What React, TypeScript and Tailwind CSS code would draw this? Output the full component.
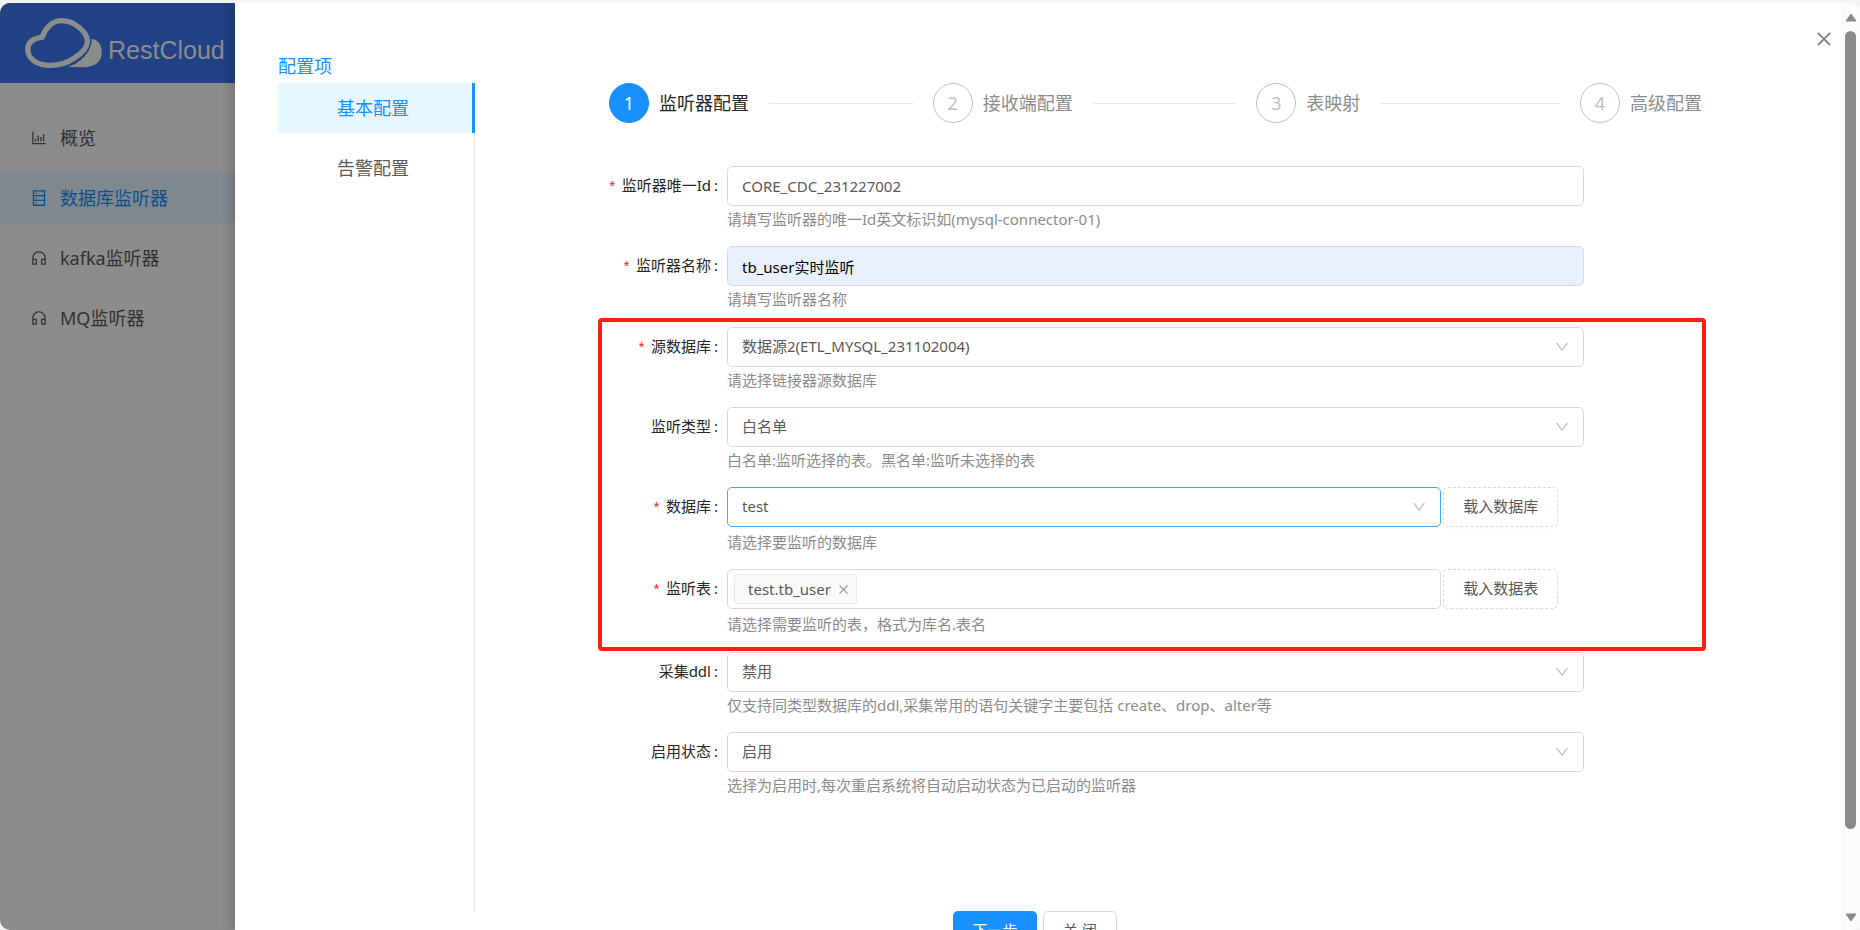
import { useState, type ReactNode } from 'react';
import {
  AiOutlineBarChart,
  AiOutlineClose,
  AiOutlineCustomerService,
  AiOutlineDatabase,
  AiOutlineDown,
} from 'react-icons/ai';

const menuItems = [
  { label: '概览', icon: AiOutlineBarChart, active: false },
  { label: '数据库监听器', icon: AiOutlineDatabase, active: true },
  { label: 'kafka监听器', icon: AiOutlineCustomerService, active: false },
  { label: 'MQ监听器', icon: AiOutlineCustomerService, active: false },
];

const steps = ['监听器配置', '接收端配置', '表映射', '高级配置'];
const tabs = ['基本配置', '告警配置'];

function Logo() {
  return (
    <svg viewBox="75 54 230 150" className="w-[77px] h-[50px]" aria-hidden="true">
      <path
        d="M126 112C135 84 157 62 184 62C222 62 262 96 262 124C262 140 245 160 222 175C200 190 178 196 150 196C112 196 83 178 83 148C83 126 102 113 126 112Z"
        fill="none"
        stroke="#8c8c8c"
        strokeWidth="16"
        strokeLinejoin="round"
      />
      <path
        d="M274 117C292 118 304 132 305 156C305 186 285 200 250 202L203 201C238 190 277 156 274 117Z"
        fill="#8c8c8c"
      />
    </svg>
  );
}

function Sidebar() {
  return (
    <aside className="w-[235px] shrink-0 bg-[#8c8c8c]">
      <div className="flex h-20 items-center bg-[#204184] pl-[25px]">
        <Logo />
        <span className="ml-[6px] pt-[14px] font-['Liberation_Sans',sans-serif] text-[25px] leading-8 text-[#8c8c8c]">
          RestCloud
        </span>
      </div>
      <nav className="mt-[30px] flex flex-col gap-[10px]">
        {menuItems.map(({ label, icon: Icon, active }) => (
          <a
            key={label}
            href="#"
            className={`flex h-[50px] items-center gap-3 pl-[30px] text-[18px] ${
              active ? 'bg-[#7f888c] text-[#0d4f8c]' : 'text-[#313131]'
            }`}
          >
            <Icon size={18} />
            <span>{label}</span>
          </a>
        ))}
      </nav>
    </aside>
  );
}

function Steps() {
  return (
    <ol className="flex gap-5">
      {steps.map((title, i) => (
        <li
          key={title}
          className={`flex items-center ${i < steps.length - 1 ? 'flex-1' : 'flex-none'}`}
        >
          <span
            className={`flex size-10 shrink-0 items-center justify-center rounded-full border text-[18px] ${
              i === 0
                ? 'border-[#1890ff] bg-[#1890ff] text-white'
                : 'border-[#bfbfbf] text-[#bfbfbf]'
            }`}
          >
            {i + 1}
          </span>
          <span
            className={`ml-[10px] whitespace-nowrap text-[18px] ${
              i === 0 ? 'text-[#262626]' : 'text-[#8c8c8c]'
            }`}
          >
            {title}
          </span>
          {i < steps.length - 1 && <span className="ml-5 h-px flex-1 bg-[#e8e8e8]" />}
        </li>
      ))}
    </ol>
  );
}

interface FieldProps {
  id: string;
  label: string;
  hint: string;
  required?: boolean;
  action?: string;
  children: ReactNode;
}

function Field({ id, label, hint, required, action, children }: FieldProps) {
  return (
    <div className="flex pr-[118px]">
      <label
        htmlFor={id}
        className="flex h-[38px] w-[118px] shrink-0 items-center justify-end whitespace-nowrap pr-[9px] text-[#262626]"
      >
        {required && (
          <span className="mr-[5px] pt-2 font-['Liberation_Mono',monospace] text-[#f5222d]">*</span>
        )}
        {label}
        <span className="ml-[3px]">:</span>
      </label>
      <div className="min-w-0 flex-1">
        {action ? (
          <div className="flex h-[42px] items-start gap-0.5">
            <div className="w-5/6">{children}</div>
            <button
              type="button"
              className="h-10 w-[115px] shrink-0 rounded-[5px] border border-dashed border-[#d9d9d9] pb-0.5 text-[#595959] shadow-[0_2px_0_rgba(0,0,0,0.015)]"
            >
              {action}
            </button>
          </div>
        ) : (
          children
        )}
        <p className="leading-[26px] text-[#8c8c8c]">{hint}</p>
      </div>
    </div>
  );
}

function Select({ id, options, focused }: { id: string; options: string[]; focused?: boolean }) {
  return (
    <div className="relative">
      <select
        id={id}
        className={`block h-10 w-full appearance-none rounded-[5px] border bg-white px-[14px] pb-0.5 text-[#595959] outline-none ${
          focused ? 'border-[#40a9ff]' : 'border-[#d9d9d9]'
        }`}
      >
        {options.map((option) => (
          <option key={option}>{option}</option>
        ))}
      </select>
      <AiOutlineDown
        size={16}
        className="pointer-events-none absolute right-[14px] top-3 text-[#bfbfbf]"
      />
    </div>
  );
}

function TableSelect() {
  const [tables, setTables] = useState(['test.tb_user']);

  return (
    <div className="flex h-10 items-center gap-1 rounded-[5px] border border-[#d9d9d9] bg-white px-[6px]">
      {tables.map((table) => (
        <span
          key={table}
          className="flex h-[30px] items-center gap-[6px] rounded-[3px] border border-[#e8e8e8] bg-[#fafafa] pl-[13px] pr-[6px] text-[#595959]"
        >
          {table}
          <button
            type="button"
            aria-label="移除"
            onClick={() => setTables(tables.filter((t) => t !== table))}
            className="text-[#8c8c8c]"
          >
            <AiOutlineClose size={13} />
          </button>
        </span>
      ))}
      <input id="tables" className="min-w-0 flex-1 outline-none" />
    </div>
  );
}

function ListenerForm() {
  const [listenerId, setListenerId] = useState('CORE_CDC_231227002');
  const [name, setName] = useState('tb_user实时监听');

  return (
    <form className="mt-[43px] flex flex-col gap-[14px]">
      <Field id="listenerId" label="监听器唯一Id" hint="请填写监听器的唯一Id英文标识如(mysql-connector-01)" required>
        <input
          id="listenerId"
          value={listenerId}
          onChange={(e) => setListenerId(e.target.value)}
          className="block h-10 w-full rounded-[5px] border border-[#d9d9d9] px-[14px] text-[#595959] outline-none"
        />
      </Field>
      <Field id="name" label="监听器名称" hint="请填写监听器名称" required>
        <input
          id="name"
          value={name}
          onChange={(e) => setName(e.target.value)}
          className="block h-10 w-full rounded-[5px] border border-[#d9d9d9] bg-[#e8f0fe] px-[14px] text-black outline-none"
        />
      </Field>

      {/* highlighted source settings */}
      <div className="-mb-[13px] -ml-[11px] -mr-1 -mt-2 flex flex-col gap-[14px] rounded-[4px] border-4 border-[#ff1f10] pb-[10px] pl-[7px] pt-[5px]">
        <Field id="source" label="源数据库" hint="请选择链接器源数据库" required>
          <Select id="source" options={['数据源2(ETL_MYSQL_231102004)']} />
        </Field>
        <Field id="type" label="监听类型" hint="白名单:监听选择的表。黑名单:监听未选择的表">
          <Select id="type" options={['白名单', '黑名单']} />
        </Field>
        <Field id="database" label="数据库" hint="请选择要监听的数据库" action="载入数据库" required>
          <Select id="database" options={['test']} focused />
        </Field>
        <Field id="tables" label="监听表" hint="请选择需要监听的表，格式为库名.表名" action="载入数据表" required>
          <TableSelect />
        </Field>
      </div>

      <Field id="ddl" label="采集ddl" hint="仅支持同类型数据库的ddl,采集常用的语句关键字主要包括 create、drop、alter等">
        <Select id="ddl" options={['禁用', '启用']} />
      </Field>
      <Field id="status" label="启用状态" hint="选择为启用时,每次重启系统将自动启动状态为已启动的监听器">
        <Select id="status" options={['启用', '禁用']} />
      </Field>
    </form>
  );
}

function ScrollBar() {
  return (
    <div className="flex w-[19px] shrink-0 flex-col items-center bg-[#fcfcfc] pb-2 pt-[10px]">
      <svg viewBox="0 0 12 9" className="h-[9px] w-3" aria-hidden="true">
        <path d="M6 1L11 8H1Z" fill="#8b8b8b" stroke="#8b8b8b" strokeLinejoin="round" />
      </svg>
      <div className="mt-[9px] flex w-full flex-1 flex-col items-center">
        <div className="h-[90.5%] w-[11px] rounded-full bg-[#8b8b8b]" />
      </div>
      <svg viewBox="0 0 12 9" className="h-[9px] w-3" aria-hidden="true">
        <path d="M6 8L11 1H1Z" fill="#8b8b8b" stroke="#8b8b8b" strokeLinejoin="round" />
      </svg>
    </div>
  );
}

export default function App() {
  const [tab, setTab] = useState('基本配置');

  return (
    <div className="h-screen overflow-hidden bg-[#f4f4f4] pt-[3px] font-['Noto_Sans','Noto_Sans_CJK_SC',sans-serif] text-[15px]">
      <div className="flex h-full overflow-hidden rounded-[10px]">
        <Sidebar />
        <main className="relative flex min-w-0 flex-1 bg-white shadow-[-3px_0_10px_rgba(0,0,0,0.2)]">
          <div className="flex min-w-0 flex-1 flex-col">
            <div className="flex min-h-0 flex-1 pl-[43px] pr-[139px] pt-12">
              <div className="flex w-[197px] shrink-0 flex-col">
                <h2 className="h-8 text-[18px] leading-[30px] text-[#1890ff]">配置项</h2>
                <div className="flex flex-1 flex-col gap-[10px] border-r border-[#e8e8e8]">
                  {tabs.map((item) => (
                    <button
                      key={item}
                      type="button"
                      onClick={() => setTab(item)}
                      className={`-mr-px h-[50px] border-r-[3px] pr-1 text-[18px] ${
                        tab === item
                          ? 'border-[#1890ff] bg-[#e6f7ff] text-[#1890ff]'
                          : 'border-transparent text-[#595959]'
                      }`}
                    >
                      {item}
                    </button>
                  ))}
                </div>
              </div>
              <section className="ml-[134px] min-w-0 flex-1 pt-8">
                <Steps />
                <ListenerForm />
              </section>
            </div>
            <footer className="flex h-[19px] shrink-0 justify-center gap-[6px] pr-[6px]">
              <button
                type="button"
                className="h-10 w-[84px] rounded-[5px] bg-[#1890ff] pb-0.5 text-white"
              >
                下一步
              </button>
              <button
                type="button"
                className="h-10 w-[74px] rounded-[5px] border border-[#d9d9d9] bg-white pb-0.5 text-[#595959]"
              >
                关 闭
              </button>
            </footer>
          </div>
          <button
            type="button"
            aria-label="关闭"
            className="absolute right-[26px] top-[26px] text-[#7c7c7c]"
          >
            <AiOutlineClose size={20} />
          </button>
          <ScrollBar />
        </main>
      </div>
    </div>
  );
}
